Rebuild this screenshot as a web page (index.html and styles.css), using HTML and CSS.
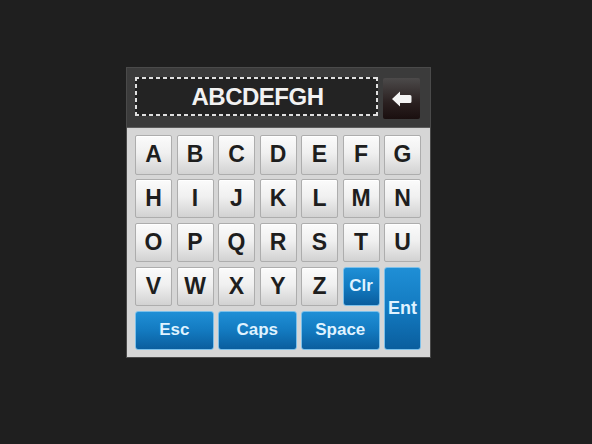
FILE: index.html
```html
<!DOCTYPE html>
<html>
<head>
<meta charset="utf-8">
<link rel="stylesheet" href="styles.css">
</head>
<body>
<div class="panel">
  <div class="header">
    <div class="display">ABCDEFGH</div>
    <div class="back">
      <svg width="20" height="16" viewBox="0 0 20 16"><path d="M0 8 L8 0.5 L8 4 L18 4 Q19.5 4 19.5 5.5 L19.5 10.5 Q19.5 12 18 12 L8 12 L8 15.5 Z" fill="#f4f4f4"/></svg>
    </div>
  </div>
  <div class="keys">
    <div class="key">A</div><div class="key">B</div><div class="key">C</div><div class="key">D</div><div class="key">E</div><div class="key">F</div><div class="key">G</div>
    <div class="key">H</div><div class="key">I</div><div class="key">J</div><div class="key">K</div><div class="key">L</div><div class="key">M</div><div class="key">N</div>
    <div class="key">O</div><div class="key">P</div><div class="key">Q</div><div class="key">R</div><div class="key">S</div><div class="key">T</div><div class="key">U</div>
    <div class="key">V</div><div class="key">W</div><div class="key">X</div><div class="key">Y</div><div class="key">Z</div>
    <div class="key blue">Clr</div>
    <div class="key blue ent">Ent</div>
    <div class="key blue wide">Esc</div>
    <div class="key blue wide">Caps</div>
    <div class="key blue wide">Space</div>
  </div>
</div>
</body>
</html>
```

FILE: styles.css
```css
html, body {
  margin: 0;
  padding: 0;
  background: #1f1f1f;
  width: 592px;
  height: 444px;
  overflow: hidden;
}
body {
  padding: 67px 0 0 126px;
  box-sizing: border-box;
  font-family: "Liberation Sans", Arial, sans-serif;
}
.panel {
  width: 305px;
  box-sizing: border-box;
  border: 1px solid #4a4a4a;
  background: #3b3b3b;
}
.header {
  display: flex;
  align-items: flex-start;
  gap: 5px;
  padding: 9px 10px 0 8px;
  height: 60px;
  box-sizing: border-box;
  border-bottom: 1px solid #5c5c5c;
}
.display {
  width: 243px;
  height: 39px;
  box-sizing: border-box;
  background:
    repeating-linear-gradient(90deg, #e0e0e0 0 4px, transparent 4px 7px) top left / 100% 2px no-repeat,
    repeating-linear-gradient(90deg, #e0e0e0 0 4px, transparent 4px 7px) bottom left / 100% 2px no-repeat,
    repeating-linear-gradient(180deg, #e0e0e0 0 4px, transparent 4px 7px) top left / 2px 100% no-repeat,
    repeating-linear-gradient(180deg, #e0e0e0 0 4px, transparent 4px 7px) top right / 2px 100% no-repeat,
    #232323;
  color: #f2f2f2;
  font-weight: bold;
  font-size: 24px;
  letter-spacing: -0.5px;
  display: flex;
  align-items: center;
  justify-content: center;
  padding-left: 2px;
}
.back {
  width: 37px;
  height: 41px;
  margin-top: 1px;
  background: linear-gradient(#4c4a4a, #2a2020 60%, #1a0f0f);
  border-radius: 2px;
  display: flex;
  align-items: center;
  justify-content: center;
}
.back svg {
  display: block;
  margin-left: 1px;
}
.keys {
  background: #d6d6d6;
  padding: 7px 10px 7px 8px;
  display: grid;
  grid-template-columns: repeat(7, 37px);
  grid-template-rows: repeat(5, 39.5px);
  column-gap: 4.5px;
  row-gap: 4.4px;
}
.key {
  box-sizing: border-box;
  border: 1px solid #adadad;
  border-radius: 2px;
  background: linear-gradient(#fbfbfb, #f0f0f0 45%, #d2d2d2);
  color: #1e1e1e;
  font-weight: bold;
  font-size: 23px;
  display: flex;
  align-items: center;
  justify-content: center;
  box-shadow: inset 0 1px 0 #ffffff;
}
.key.blue {
  border: 1px solid #7cc0ea;
  background: linear-gradient(#1f8fd6, #137ac0 50%, #0a5e9e);
  color: #dff2ff;
  font-size: 17px;
  box-shadow: none;
  border-radius: 3px;
}
.key.ent {
  grid-column: 7;
  grid-row: 4 / span 2;
  font-size: 18px;
}
.key.wide {
  grid-column: span 2;
}
```
